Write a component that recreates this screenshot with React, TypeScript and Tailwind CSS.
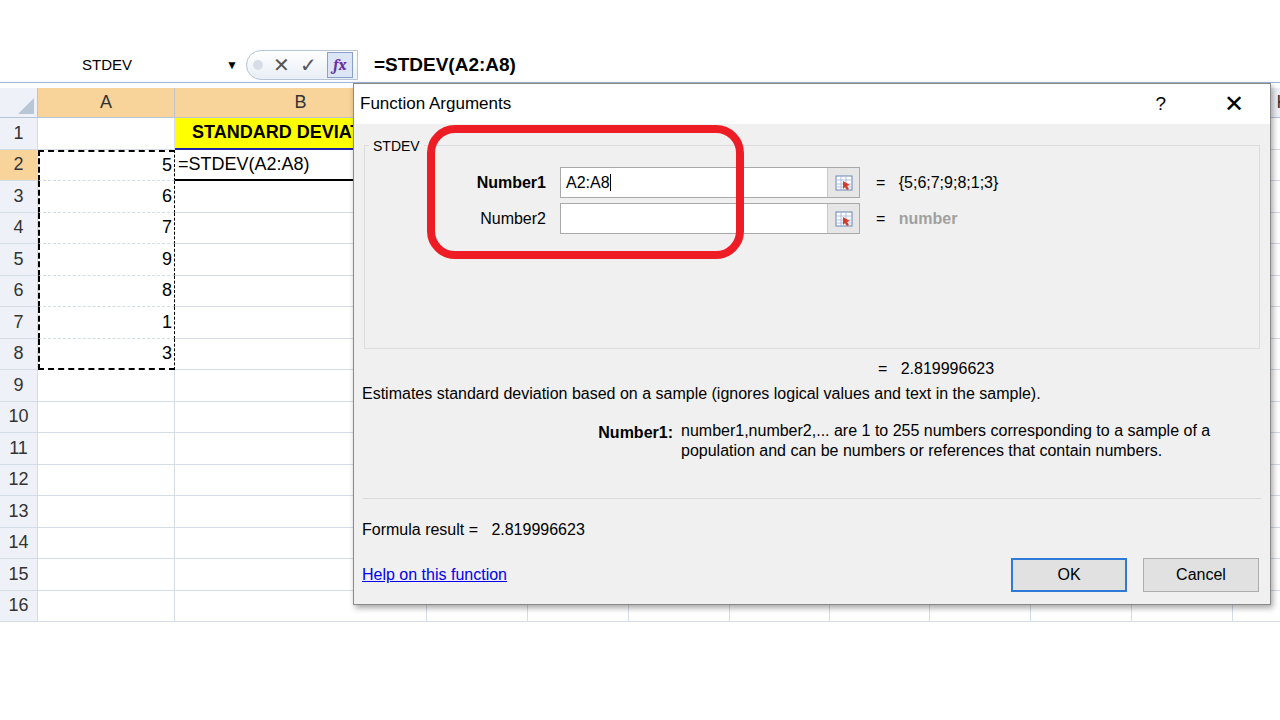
const cols = [
  { n: "", w: 38 },
  { n: "A", w: 137 },
  { n: "B", w: 252 },
  { n: "C", w: 101 },
  { n: "D", w: 101 },
  { n: "E", w: 101 },
  { n: "F", w: 100 },
  { n: "G", w: 100 },
  { n: "H", w: 101 },
  { n: "I", w: 101 },
  { n: "J", w: 101 },
  { n: "K", w: 100 },
];
const vals: Record<number, string> = { 2: "5", 3: "6", 4: "7", 5: "9", 6: "8", 7: "1", 8: "3" };

function RefBtn() {
  return (
    <div className="flex h-full w-[32px] items-center justify-center border-l border-[#c8c8c8] bg-[#e6e6e6]">
      <svg width="18" height="16" viewBox="0 0 18 16">
        <rect x="1" y="1" width="16" height="14" fill="#fff" stroke="#6a84b5" />
        <path d="M1 5h16M1 9h16M1 12h16M6 1v14M11 1v14" stroke="#9fb3d8" strokeWidth="0.8" />
        <path d="M8 6l7 4-3 1 2 3-2 1-2-3-2 2z" fill="#d43a2a" />
      </svg>
    </div>
  );
}

export default function App() {
  return (
    <div className="relative h-[720px] w-[1280px] overflow-hidden bg-white" style={{ fontFamily: "'Liberation Sans', Arial, sans-serif" }}>
      <div className="h-[48px]" />
      {/* formula bar */}
      <div className="flex h-[34px] items-center text-[16px] text-black">
        <div className="w-[82px] shrink-0" />
        <div className="w-[144px] shrink-0 text-[15px]">STDEV</div>
        <span className="text-[12px]">▼</span>
        <div className="ml-[8px] flex h-[30px] items-center gap-[10px] rounded-l-full border border-[#b8c4d6] bg-gradient-to-b from-white to-[#e8eef6] pl-[6px] pr-[4px]">
          <span className="h-[10px] w-[10px] rounded-full bg-[#d7dde6]" />
          <span className="text-[20px] text-[#555]">✕</span>
          <span className="text-[20px] text-[#555]">✓</span>
          <span className="flex h-[26px] w-[26px] items-center justify-center border border-[#8aa0c8] bg-[#dbe5f5] font-serif text-[16px] font-bold italic text-[#6a2fa0]">fx</span>
        </div>
        <div className="ml-[16px] text-[19px] font-bold">=STDEV(A2:A8)</div>
      </div>
      {/* sheet */}
      <div className="border-t border-[#9eb6ce]">
        <div className="mt-[5px] flex h-[30px] bg-[#eef2f8] text-[18px] text-[#333]">
          {cols.map((c, i) => (
            <div key={i} style={{ width: c.w }} className={`flex shrink-0 items-center justify-center border-r border-b border-[#b6c5d9] ${i === 1 || i === 2 ? "bg-[#f8d49a]" : ""}`}>
              {i === 0 ? <span className="ml-auto mr-[3px] mt-auto mb-[3px] h-0 w-0 [border-bottom:16px_solid_#b9c6d6] [border-left:16px_solid_transparent]" /> : c.n}
            </div>
          ))}
        </div>
        {Array.from({ length: 16 }, (_, r) => r + 1).map((r) => (
          <div key={r} className="flex h-[31.5px] text-[18px]">
            {cols.map((c, i) => (
              <div key={i} style={{ width: c.w }} className={`flex shrink-0 items-center border-r border-b border-[#d4dce6] ${i === 0 ? (r === 2 ? "justify-center bg-[#f8d49a] text-[#333]" : "justify-center bg-[#eef2f8] text-[#333]") : ""} ${i === 2 && r === 1 ? "bg-[#ffff00] font-bold border-b-2 border-b-[#2222aa]" : ""} ${i === 2 && r === 2 ? "border-b-2 border-b-black" : ""} ${i === 1 && r >= 2 && r <= 8 ? "justify-end border-x-2 border-x-black border-dashed pr-[2px]" : ""} ${i === 1 && r === 2 ? "border-t-2 border-t-black" : ""} ${i === 1 && r === 8 ? "border-b-2 border-b-black" : ""}`}>
                {i === 0 ? r : i === 1 ? vals[r] : i === 2 && r === 1 ? <span className="pl-[17px] whitespace-nowrap">STANDARD DEVIATION</span> : i === 2 && r === 2 ? <span className="pl-[3px]">=STDEV(A2:A8)</span> : null}
              </div>
            ))}
          </div>
        ))}
      </div>

      {/* dialog */}
      <div className="absolute left-[353px] top-[83px] w-[918px] h-[522px] border border-[#8a8a8a] bg-[#f0f0f0] shadow-[2px_3px_6px_rgba(0,0,0,0.35)] text-[16px] text-black">
        <div className="flex h-[40px] items-center bg-white pl-[6px] text-[17px]">
          <span className="flex-1">Function Arguments</span>
          <span className="mr-[58px] text-[19px]">?</span>
          <span className="mr-[26px] text-[24px] font-light">✕</span>
        </div>
        <div className="relative mx-[10px] mt-[21px] h-[204px] border border-[#dcdcdc]">
          <span className="absolute -top-[10px] left-[4px] bg-[#f0f0f0] px-[4px] text-[14px]">STDEV</span>
          <div className="flex flex-col gap-[5px] pt-[21px]">
            <div className="flex h-[31px] items-center">
              <span className="w-[195px] pr-[14px] text-right font-bold">Number1</span>
              <div className="flex h-full w-[300px] border border-[#a9a9a9] bg-white">
                <span className="flex-1 pl-[5px] leading-[29px]">A2:A8<span className="border-l border-black" /></span>
                <RefBtn />
              </div>
              <span className="ml-[16px]">=&nbsp;&nbsp; {"{5;6;7;9;8;1;3}"}</span>
            </div>
            <div className="flex h-[31px] items-center">
              <span className="w-[195px] pr-[14px] text-right">Number2</span>
              <div className="flex h-full w-[300px] border border-[#a9a9a9] bg-white">
                <span className="flex-1" />
                <RefBtn />
              </div>
              <span className="ml-[16px]">=&nbsp;&nbsp; <span className="font-bold text-[#a0a0a0]">number</span></span>
            </div>
          </div>
        </div>
        <div className="mt-[8px] pl-[524px]">=&nbsp;&nbsp; 2.819996623</div>
        <div className="mt-[1px] pl-[8px]">Estimates standard deviation based on a sample (ignores logical values and text in the sample).</div>
        <div className="mt-[15px] flex">
          <span className="w-[327px] pr-[8px] text-right font-bold">Number1:</span>
          <span className="w-[580px] leading-[20px]">number1,number2,... are 1 to 255 numbers corresponding to a sample of a population and can be numbers or references that contain numbers.</span>
        </div>
        <div className="mx-[9px] mt-[37px] border-t border-[#dadada]" />
        <div className="mt-[19px] pl-[8px]">Formula result =&nbsp;&nbsp; 2.819996623</div>
        <div className="mt-[16px] flex items-center pl-[8px]">
          <span className="flex-1 text-[#0000ee] underline">Help on this function</span>
          <button className="h-[34px] w-[116px] border-2 border-[#2d7bd6] bg-[#e1e1e1]">OK</button>
          <button className="ml-[16px] mr-[11px] h-[34px] w-[116px] border border-[#adadad] bg-[#e1e1e1]">Cancel</button>
        </div>
      </div>
      {/* highlight */}
      <div className="absolute left-[427px] top-[125px] h-[134px] w-[317px] rounded-[28px] border-[8px] border-[#ee1c24]" />
    </div>
  );
}
